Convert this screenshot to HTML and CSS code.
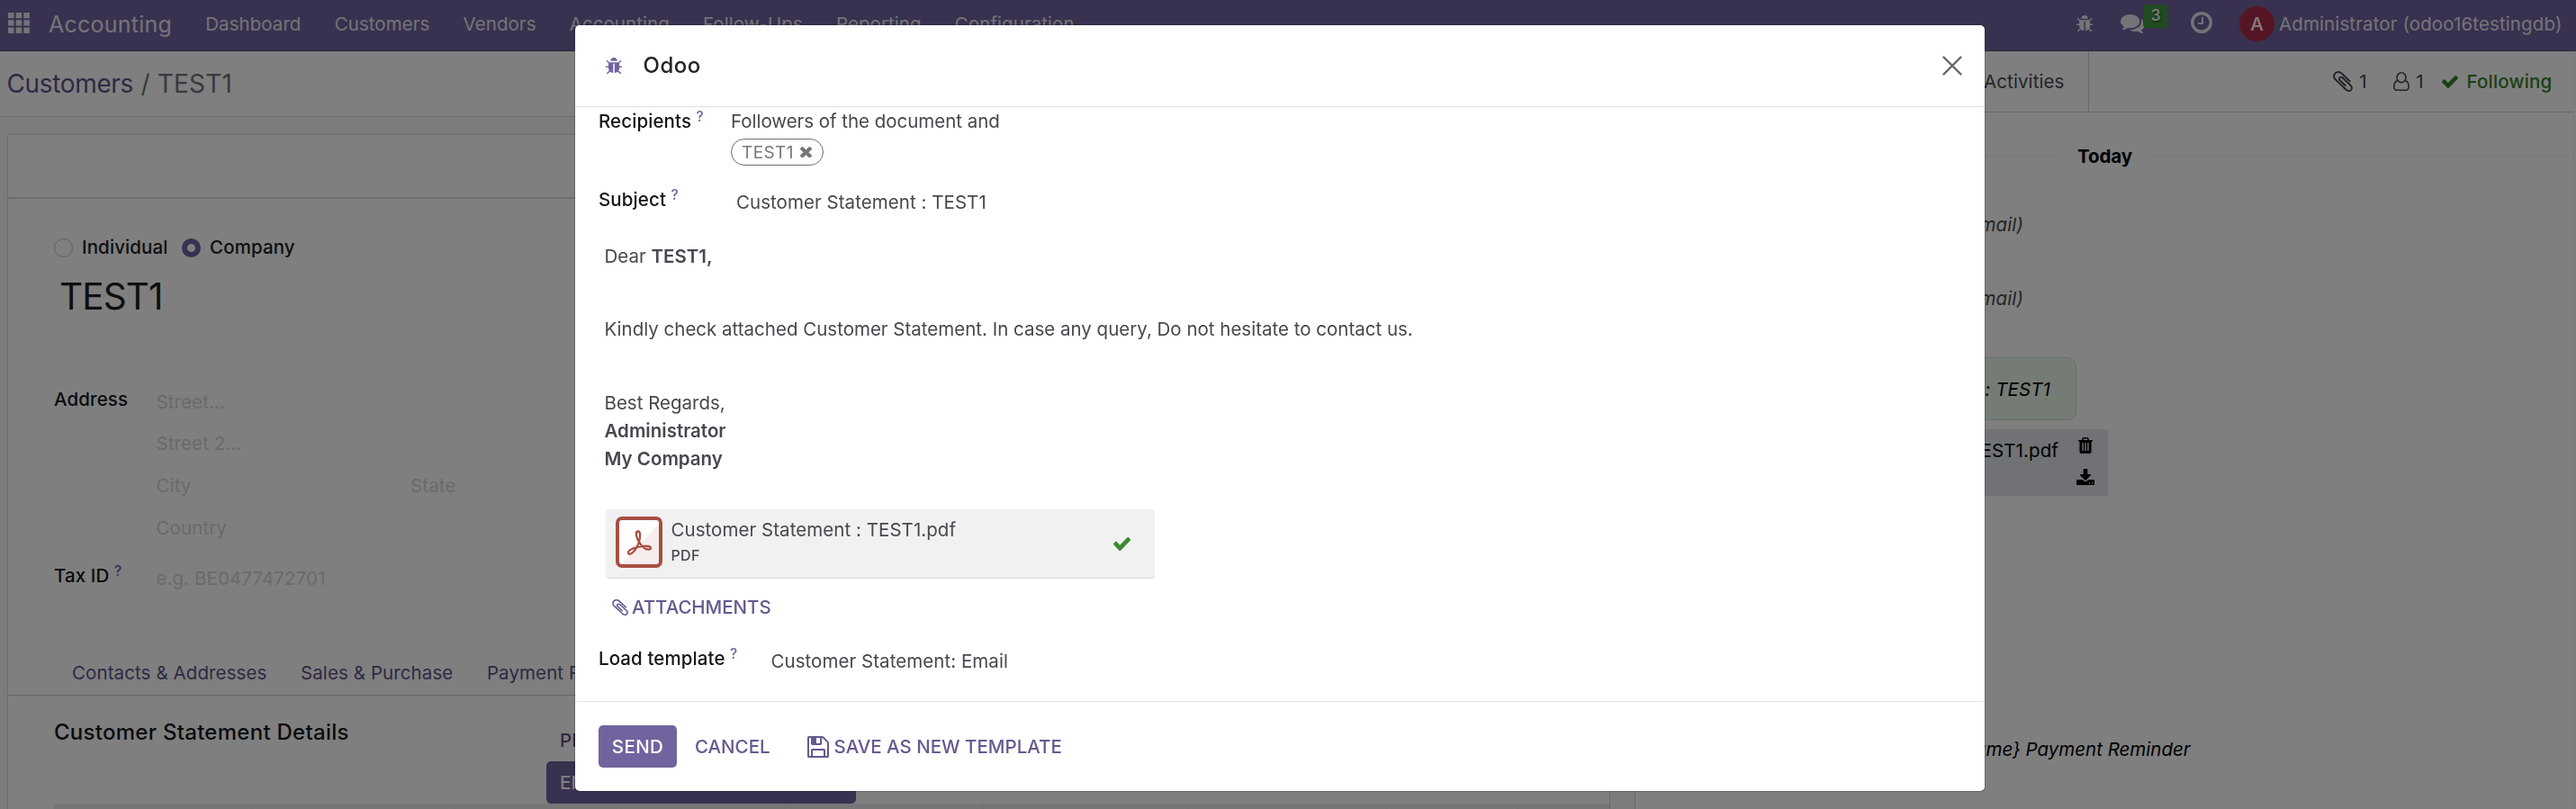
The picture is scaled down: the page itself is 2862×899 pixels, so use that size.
FILE: index.html
```
<!DOCTYPE html>
<html lang="en">
<head>
<meta charset="utf-8">
<title>Odoo</title>
<link rel="stylesheet" href="styles.css">
</head>
<body>
<svg class="defs" width="0" height="0">
  <symbol id="bug" viewBox="128 64 1568 1600" preserveAspectRatio="none"><path d="M1696 960q0 26-19 45t-45 19h-224q0 171-67 290l208 209q19 19 19 45t-19 45q-18 19-45 19t-45-19l-198-197q-5 5-15 13t-42 28.5-65 36.5-82 29-97 13v-896h-128v896q-51 0-101.500-13.500t-87-33-66-39-43.500-32.500l-15-14-183 207q-20 21-48 21-24 0-43-16-19-18-20.500-44.500t15.500-46.500l202-227q-58-114-58-274h-224q-26 0-45-19t-19-45 19-45 45-19h224v-294l-173-173q-19-19-19-45t19-45 45-19 45 19l173 173h844l173-173q19-19 45-19t45 19 19 45-19 45l-173 173v294h224q26 0 45 19t19 45zm-480-576h-640q0-133 93.500-226.500t226.500-93.500 226.500 93.500 93.500 226.500z"/></symbol>
  <symbol id="check" viewBox="121 334 1550 1188" preserveAspectRatio="none"><path d="M1671 566q0 40-28 68l-724 724-136 136q-28 28-68 28t-68-28l-136-136-362-362q-28-28-28-68t28-68l136-136q28-28 68-28t68 28l294 295 656-657q28-28 68-28t68 28l136 136q28 28 28 68z"/></symbol>
  <symbol id="times" viewBox="302 366 1188 1188" preserveAspectRatio="none"><path d="M1490 1322q0 40-28 68l-136 136q-28 28-68 28t-68-28l-294-294-294 294q-28 28-68 28t-68-28l-136-136q-28-28-28-68t28-68l294-294-294-294q-28-28-28-68t28-68l136-136q28-28 68-28t68 28l294 294 294-294q28-28 68-28t68 28l136 136q28 28 28 68t-28 68l-294 294 294 294q28 28 28 68z"/></symbol>
  <symbol id="comments" viewBox="0 256 1792 1408" preserveAspectRatio="none"><path d="M1408 768q0 139-94 257t-256.500 186.500-353.500 68.500q-86 0-176-16-124 88-278 128-36 9-86 16h-3q-11 0-20.500-8t-11.500-21q-1-3-1-6.500t.5-6.500 2-6l2.500-5 3.500-5.500 4-5 4.500-5 4-4.500q5-6 23-25t26-29.500 22.500-29 25-38.500 20.500-44q-124-72-195-177t-71-224q0-139 94-257t256.500-186.500 353.500-68.500 353.500 68.500 256.500 186.500 94 257zm384 256q0 120-71 224.500t-195 176.500q10 24 20.500 44t25 38.500 22.500 29 26 29.500 23 25q1 1 4 4.500t4.500 5 4 5 3.500 5.500l2.500 5 2 6 .5 6.500-1 6.500q-3 14-13 22t-22 7q-50-7-86-16-154-40-278-128-90 16-176 16-271 0-472-132 58 4 88 4 161 0 309-45t264-129q125-92 192-212t67-254q0-77-23-152 129 71 204 178t75 230z"/></symbol>
  <symbol id="clock" viewBox="128 128 1536 1536" preserveAspectRatio="none"><path d="M1024 544v448q0 14-9 23t-23 9h-320q-14 0-23-9t-9-23v-64q0-14 9-23t23-9h224v-352q0-14 9-23t23-9h64q14 0 23 9t9 23zm416 352q0-148-73-273t-198-198-273-73-273 73-198 198-73 273 73 273 198 198 273 73 273-73 198-198 73-273zm224 0q0 209-103 385.500t-279.500 279.500-385.500 103-385.500-103-279.500-279.500-103-385.500 103-385.500 279.500-279.500 385.500-103 385.500 103 279.500 279.500 103 385.500z"/></symbol>
  <symbol id="clip" viewBox="190 128 1412 1536" preserveAspectRatio="none"><path d="M1596 1385q0 117-79 196t-196 79q-135 0-235-100l-777-776q-113-115-113-271 0-159 110-270t269-111q158 0 273 113l605 606q10 10 10 22 0 16-30.500 46.500t-46.500 30.500q-13 0-23-10l-606-607q-79-77-181-77-106 0-179 75t-73 181q0 105 76 181l776 777q63 63 145 63 64 0 106-42t42-106q0-82-63-145l-581-581q-26-24-60-24-29 0-48 19t-19 48q0 32 25 59l410 410q10 10 10 22 0 16-31 47t-47 31q-12 0-22-10l-410-410q-63-61-63-149 0-82 57-139t139-57q88 0 149 63l581 581q100 98 100 235z"/></symbol>
  <symbol id="floppy" viewBox="128 128 1536 1536" preserveAspectRatio="none"><path d="M512 1536h768v-384h-768v384zm896 0h128v-896q0-14-10-38.500t-20-34.500l-281-281q-10-10-34-20t-39-10v416q0 40-28 68t-68 28h-576q-40 0-68-28t-28-68v-416h-128v1280h128v-416q0-40 28-68t68-28h832q40 0 68 28t28 68v416zm-384-928v-320q0-13-9.500-22.500t-22.500-9.500h-192q-13 0-22.500 9.500t-9.500 22.500v320q0 13 9.500 22.500t22.500 9.500h192q13 0 22.500-9.500t9.500-22.500zm640 32v928q0 40-28 68t-68 28h-1344q-40 0-68-28t-28-68v-1344q0-40 28-68t68-28h928q40 0 88 20t76 48l280 280q28 28 48 76t20 88z"/></symbol>
  <symbol id="trash" viewBox="192 128 1408 1536" preserveAspectRatio="none"><path d="M704 1376v-704q0-14-9-23t-23-9h-64q-14 0-23 9t-9 23v704q0 14 9 23t23 9h64q14 0 23-9t9-23zm256 0v-704q0-14-9-23t-23-9h-64q-14 0-23 9t-9 23v704q0 14 9 23t23 9h64q14 0 23-9t9-23zm256 0v-704q0-14-9-23t-23-9h-64q-14 0-23 9t-9 23v704q0 14 9 23t23 9h64q14 0 23-9t9-23zm-544-992h448l-48-117q-7-9-17-11h-317q-10 2-17 11zm928 32v64q0 14-9 23t-23 9h-96v948q0 83-47 143.500t-113 60.500h-832q-66 0-113-58.500t-47-141.500v-952h-96q-14 0-23-9t-9-23v-64q0-14 9-23t23-9h309l70-167q15-37 54-63t79-26h320q40 0 79 26t54 63l70 167h309q14 0 23 9t9 23z"/></symbol>
  <symbol id="download" viewBox="64 0 1664 1536" preserveAspectRatio="none"><path d="M1344 1344q0-26-19-45t-45-19-45 19-19 45 19 45 45 19 45-19 19-45zm256 0q0-26-19-45t-45-19-45 19-19 45 19 45 45 19 45-19 19-45zm128-224v320q0 40-28 68t-68 28h-1472q-40 0-68-28t-28-68v-320q0-40 28-68t68-28h465l135 136q58 56 136 56t136-56l136-136h464q40 0 68 28t28 68zm-325-569q17 41-14 70l-448 448q-18 19-45 19t-45-19l-448-448q-31-29-14-70 17-39 59-39h256v-448q0-26 19-45t45-19h256q26 0 45 19t19 45v448h256q42 0 59 39z"/></symbol>
</svg>

<header class="navbar">
  <svg class="apps" viewBox="0 0 24 23"><path d="M0 0h6.500v6.300H0zM8.700 0h6.500v6.300H8.700zM17.400 0h6.500v6.300h-6.500zM0 8.300h6.500v6.300H0zM8.700 8.300h6.500v6.300H8.700zM17.400 8.300h6.500v6.300h-6.500zM0 16.600h6.500v6.300H0zM8.700 16.600h6.500v6.300H8.700zM17.400 16.600h6.500v6.300h-6.500z"/></svg>
  <span class="brand">Accounting</span>
  <nav class="menu">
    <span>Dashboard</span><span>Customers</span><span>Vendors</span><span>Accounting</span><span>Follow-Ups</span><span>Reporting</span><span>Configuration</span>
  </nav>
  <div class="systray">
    <svg class="ic-bug"><use href="#bug"/></svg>
    <span class="messages"><svg class="ic-comments"><use href="#comments"/></svg><b class="badge">3</b></span>
    <svg class="ic-clock"><use href="#clock"/></svg>
    <span class="avatar">A</span>
    <span class="user">Administrator (odoo16testingdb)</span>
  </div>
</header>

<main class="main">
  <section class="form">
    <div class="breadcrumb"><span class="crumb-link">Customers</span><span class="slash">/</span><span class="crumb-current">TEST1</span></div>
    <div class="form-bg">
      <div class="sheet">
        <div class="statusbar"></div>
        <div class="sheet-body">
          <div class="radios">
            <i class="radio"></i><span class="radio-label">Individual</span>
            <i class="radio checked"></i><span class="radio-label">Company</span>
          </div>
          <h1 class="name">TEST1</h1>
          <div class="field-row address">
            <div class="label">Address</div>
            <div class="placeholder">
              <div class="line">Street...</div>
              <div class="line">Street 2...</div>
              <div class="line"><span class="city">City</span><span>State</span></div>
              <div class="line">Country</div>
            </div>
          </div>
          <div class="field-row tax">
            <div class="label">Tax ID<sup class="help">?</sup></div>
            <div class="placeholder">e.g. BE0477472701</div>
          </div>
        </div>
        <div class="tabs"><span>Contacts &amp; Addresses</span><span>Sales &amp; Purchase</span><span>Payment F</span></div>
        <div class="tab-page">
          <div class="statement">
            <h2 class="statement-title">Customer Statement Details</h2>
            <div class="statement-buttons">
              <span class="btn-print">PRINT</span>
              <span class="btn-email">EMAIL</span>
            </div>
          </div>
          <div class="table-head"><i></i><i></i><i></i><i></i><i></i><i></i><i></i><i></i><i></i></div>
        </div>
      </div>
    </div>
  </section>

  <aside class="chatter">
    <div class="chatter-top">
      <div class="chatter-tabs"><span>Activities</span></div>
      <div class="chatter-info">
        <svg class="ic-clip"><use href="#clip"/></svg><span class="count">1</span>
        <svg class="ic-user" viewBox="0 0 18 21"><ellipse cx="9" cy="6.200" rx="5" ry="5.400"/><path d="M4.800 9.600C2 10.300.8 12.800.8 16.300c0 2.400 1.400 3.900 3.400 3.900h9.600c2 0 3.400-1.500 3.400-3.900 0-3.500-1.200-6-4-6.700"/></svg><span class="count">1</span>
        <svg class="ic-follow"><use href="#check"/></svg><span class="following">Following</span>
      </div>
    </div>
    <div class="day"><i></i><b>Today</b><i></i></div>
    <div class="note first">(Email)</div>
    <div class="note second">(Email)</div>
    <div class="bubble">Customer Statement : TEST1</div>
    <div class="file">
      <span class="file-name">TEST1.pdf</span>
      <span class="file-actions"><svg class="ic-trash"><use href="#trash"/></svg><svg class="ic-download"><use href="#download"/></svg></span>
    </div>
    <div class="reminder">{name} Payment Reminder</div>
  </aside>
  <div class="scroll-edge"></div>
</main>

<div class="overlay">
  <div class="modal">
    <div class="modal-head">
      <svg class="ic-bug purple"><use href="#bug"/></svg>
      <span class="modal-title">Odoo</span>
      <svg class="close" viewBox="0 0 22 22"><path d="M1.500 1.500l19 19M20.500 1.500l-19 19"/></svg>
    </div>
    <div class="modal-body">
      <div class="m-row">
        <div class="label m-label">Recipients<sup class="help">?</sup></div>
        <div>
          <div class="followers">Followers of the document and</div>
          <div class="tag">TEST1<svg class="ic-times"><use href="#times"/></svg></div>
        </div>
      </div>
      <div class="m-row subject">
        <div class="label m-label">Subject<sup class="help">?</sup></div>
        <div class="value">Customer Statement : TEST1</div>
      </div>
      <div class="mail">
        <p>Dear <b>TEST1,</b></p>
        <p>Kindly check attached Customer Statement. In case any query, Do not hesitate to contact us.</p>
        <p>Best Regards,<br><b>Administrator</b><br><b>My Company</b></p>
      </div>
      <div class="attachment">
        <svg class="pdf" viewBox="0 0 52 57"><rect x="2" y="2" width="48" height="53" rx="5" fill="#fff"/><path d="M50 6v44q0 5-5 5H5z" fill="#f6edec"/><rect x="2" y="2" width="48" height="53" rx="5" fill="none" stroke="#a94f42" stroke-width="4"/><path class="pdf-mark" d="M26 28c-3-4-4.500-11-1.500-11.500 3.500-.5 3 6.500 1.500 11.500-2 6-6 12-9.500 13.500-2.500 1-3.500-1.500-1.500-3.500 4-3.500 14-5.500 20.500-5 4.500.4 4.500 3.700 1 3.700-4 0-8-4-10.500-8.700z"/></svg>
        <div class="attachment-text"><div class="attachment-name">Customer Statement : TEST1.pdf</div><div class="attachment-type">PDF</div></div>
        <svg class="ic-done"><use href="#check"/></svg>
      </div>
      <div class="attach-btn"><svg class="ic-clip small"><use href="#clip"/></svg>ATTACHMENTS</div>
      <div class="m-row template">
        <div class="label m-label wide">Load template<sup class="help">?</sup></div>
        <div class="value">Customer Statement: Email</div>
      </div>
    </div>
    <div class="modal-foot">
      <span class="send">SEND</span>
      <span class="cancel">CANCEL</span>
      <span class="save"><svg class="ic-floppy"><use href="#floppy"/></svg>SAVE AS NEW TEMPLATE</span>
    </div>
  </div>
</div>
</body>
</html>
```
FILE: styles.css
```
* { box-sizing: border-box; }
html, body { height: 100%; overflow: hidden; }
body {
  margin: 0;
  display: flex;
  flex-direction: column;
  font: 400 20.5px/30px Inter, "Liberation Sans", sans-serif;
  letter-spacing: .1px;
  color: #46494f;
  background: #fff;
}
svg { display: block; flex: none; fill: currentColor; }
.defs { position: absolute; }
span, b { white-space: nowrap; }
b { font-weight: 600; letter-spacing: 0; }
h1, h2, p { margin: 0; font-weight: inherit; }

/* Navbar */
.navbar {
  flex: none;
  height: 57px;
  padding: 0 0 3px 9px;
  display: flex;
  align-items: center;
  background: #71639e;
  border-bottom: 1px solid #5a4f7f;
  color: #e9e7f0;
}
.apps { width: 24px; height: 23px; margin-top: -3px; }
.brand { margin: 0 37px 0 21px; font-size: 25px; letter-spacing: .25px; }
.menu { display: flex; gap: 37.200px; letter-spacing: .06px; }
.systray { width: 555.500px; margin-left: auto; display: flex; align-items: center; }
.ic-bug { width: 18.5px; height: 18.5px; }
.messages { position: relative; margin-left: 31px; }
.ic-comments { width: 27px; height: 21px; }
.badge {
  position: absolute;
  left: 25px;
  top: -11px;
  width: 28px;
  height: 26px;
  border-radius: 4px;
  background: #429642;
  color: #fff;
  font-size: 17px;
  line-height: 24px;
  font-weight: 500;
  text-align: center;
  text-shadow: 1px 2px 2px rgba(0, 0, 0, .4);
}
.ic-clock { width: 24px; height: 24px; margin: -4px 0 0 51px; }
.avatar {
  width: 39px;
  height: 39px;
  margin: -1px 0 0 30px;
  border-radius: 50%;
  background: #ad2b48;
  color: #fff;
  font-weight: 500;
  line-height: 39px;
  text-align: center;
}
.user { margin-left: 5px; letter-spacing: .12px; }

/* Form */
.main { flex: 1; min-height: 0; display: flex; overflow: hidden; }
.form { width: 1816px; flex: none; display: flex; flex-direction: column; }
.breadcrumb {
  height: 73px;
  flex: none;
  display: flex;
  align-items: center;
  padding-left: 7.500px;
  border-bottom: 1px solid #d8dae6;
  font-size: 28px;
  letter-spacing: -.35px;
}
.crumb-link { color: #5f5389; }
.slash { margin: 0 8.500px; color: #6c757d; }
.crumb-current { color: #6c757d; letter-spacing: .2px; }
.form-bg { flex: 1; padding: 19px 27px 0 8px; background: #f8f8fb; }
.sheet { height: 100%; background: #fff; border: 1px solid #d9dae2; border-bottom: 0; }
.statusbar { height: 71px; border-bottom: 2px solid #dcdde3; }
.sheet-body { padding: 39px 0 0 51px; }
.radios { display: flex; align-items: center; height: 30px; color: #1c1e22; font-weight: 500; }
.radio { width: 21px; height: 21px; border-radius: 50%; border: 1.500px solid #b9babf; }
.radio.checked { border: 6px solid #71639e; }
.radio-label { margin: 0 15.500px 0 10px; }
.name { margin: 15px 0 0 6px; height: 50px; font-size: 40.500px; line-height: 50px; letter-spacing: -.9px; color: #1c1e22; }
.field-row { display: grid; grid-template-columns: 113.500px 1fr; }
.address { margin-top: 73.500px; }
.label { font-weight: 500; color: #15171a; white-space: nowrap; }
.placeholder { padding-top: 3px; color: #d3d4d8; }
.line { height: 46.700px; display: flex; }
.city { width: 282.500px; }
.tax { margin-top: 6.500px; }
.help { margin-left: 5.500px; font-size: 15.500px; line-height: 0; vertical-align: 7px; color: #71639e; }
.tabs {
  margin-top: 75px;
  height: 40px;
  padding-left: 71px;
  display: flex;
  gap: 37.500px;
  color: #5f5389;
  border-bottom: 1px solid #c9cad2;
}
.tab-page { padding: 26px 0 0 51px; }
.statement { display: flex; }
.statement-title { width: 547px; font-size: 24px; font-weight: 500; letter-spacing: .27px; color: #15171a; }
.statement-buttons { width: 344px; font-weight: 500; }
.btn-print, .btn-email { display: block; height: 47px; padding-left: 15px; line-height: 47px; color: #5f5389; }
.btn-email { border-radius: 5px; background: #71639e; color: #fff; }
.table-head {
  display: grid;
  grid-template-columns: 222px 223px 186px 188px 214px 226px 222px 146px 50px;
  height: 20px;
  background: #ecedf2;
}
.table-head i { border-right: 1px solid #dfe0e6; }
.table-head i:last-child { border: 0; }

/* Chatter */
.chatter { flex: 1; border-left: 1px solid #d8dae2; }
.chatter-top { display: flex; height: 68px; border-bottom: 1px solid #cfd1de; }
.chatter-tabs {
  width: 504px;
  padding-right: 26.500px;
  display: flex;
  align-items: center;
  justify-content: flex-end;
  border-right: 1px solid #cfd1de;
}
.chatter-info { flex: 1; display: flex; align-items: center; justify-content: flex-end; padding-right: 24.500px; }
.ic-clip { width: 22px; height: 23px; }
.count { width: 14px; margin-left: 4px; text-align: center; }
.ic-user { width: 18px; height: 21px; margin-left: 27px; fill: none; stroke: currentColor; stroke-width: 1.600; }
.ic-follow { width: 18px; height: 14px; margin: 0 9px 0 18px; color: #35802b; }
.following { color: #35802b; font-weight: 500; letter-spacing: .2px; }
.day { margin-top: 33.500px; display: flex; align-items: center; color: #000; }
.day i { flex: 1; height: 1px; background: #f3f3f5; }
.day b { margin: 0 21px; font-weight: 700; letter-spacing: -.1px; }
.note { width: 431px; text-align: right; font-style: italic; }
.first { margin-top: 46px; }
.second { margin-top: 52.500px; }
.bubble {
  width: 490px;
  height: 70px;
  margin-top: 50px;
  padding: 20px 28px 0 0;
  text-align: right;
  font-style: italic;
  color: #000;
  background: #ebf6eb;
  border: 1px solid #d2ded3;
  border-radius: 0 10px 10px 0;
}
.file {
  width: 525px;
  height: 74px;
  margin-top: 10px;
  padding: 9px 15px 0 0;
  display: flex;
  justify-content: flex-end;
  color: #000;
  background: #e2e4ea;
  border-radius: 4px;
}
.file-actions { width: 20px; margin-left: 20px; display: flex; flex-direction: column; align-items: center; gap: 17px; }
.ic-trash { width: 16px; height: 18px; }
.ic-download { width: 20px; height: 18px; }
.reminder { width: 616.500px; margin-top: 267px; text-align: right; font-style: italic; color: #000; letter-spacing: 0; }
.scroll-edge { width: 2px; background: #fff; box-shadow: -1px 0 #f1f1f4; }

/* Dialog */
.overlay {
  position: fixed;
  inset: 0;
  padding: 28px 18px 20px 0;
  display: flex;
  justify-content: center;
  background: rgba(0, 0, 0, .5);
}
.modal {
  width: 1566px;
  height: 851px;
  display: flex;
  flex-direction: column;
  background: #fff;
  border-radius: 5px;
  box-shadow: 0 0 0 1px rgba(0, 0, 0, .2);
}
.modal-head {
  flex: none;
  height: 91px;
  padding: 0 25.500px 0 33.500px;
  display: flex;
  align-items: center;
  border-bottom: 1px solid #dee2e6;
}
.purple { color: #71639e; }
.modal-title { margin-left: 23.500px; font-size: 24px; font-weight: 500; letter-spacing: .5px; color: #212529; }
.close { width: 22px; height: 22px; margin-left: auto; stroke: #666; stroke-width: 2.400; stroke-linecap: round; }
.modal-body { flex: 1; padding: .5px 25px 0 26px; }
.m-row { display: flex; }
.m-label { width: 147px; }
.wide { width: 186px; }
.followers { letter-spacing: -.03px; }
.tag {
  width: 103px;
  height: 30px;
  margin-top: 4.500px;
  padding: 1px 0 0 11px;
  display: flex;
  align-items: center;
  border: 1.500px solid #6f6f6f;
  border-radius: 15px;
  font-size: 19px;
  letter-spacing: .4px;
  color: #777;
}
.ic-times { width: 13px; height: 12.500px; margin: -1px 0 0 7px; }
.subject { margin-top: 22.500px; }
.subject .value { padding: 3px 0 0 6px; }
.value { letter-spacing: .05px; }
.mail { margin: 29.500px 0 0 6.500px; line-height: 31.300px; letter-spacing: 0; }
.mail p + p { margin-top: 50px; }
.attachment {
  width: 610px;
  height: 77px;
  margin: 40.500px 0 0 8px;
  padding-left: 11px;
  display: flex;
  background: #f1f1f1;
  border-bottom: 1px solid #d5d6d9;
  border-radius: 4px;
}
.pdf { width: 52px; height: 57px; margin-top: 8px; }
.pdf-mark { fill: none; stroke: #a94f42; stroke-width: 2.300; stroke-linejoin: round; }
.attachment-text { padding: 8px 0 0 9.500px; }
.attachment-name { letter-spacing: .05px; }
.attachment-type { font-size: 16px; line-height: 27px; font-weight: 500; letter-spacing: .3px; }
.ic-done { width: 19px; height: 15px; margin: 31px 27px 0 auto; color: #3a8a2c; }
.attach-btn {
  margin: 17px 0 0 14.500px;
  display: flex;
  align-items: center;
  font-weight: 500;
  letter-spacing: -.04px;
  color: #66598f;
}
.small { width: 18px; height: 18px; margin-right: 4.500px; }
.template { margin-top: 27px; }
.template .value { padding: 3px 0 0 5.500px; }
.modal-foot {
  flex: none;
  height: 100px;
  padding: 26px 0 0 26px;
  display: flex;
  border-top: 1px solid #dee2e6;
  line-height: 47px;
  font-weight: 500;
  letter-spacing: 0;
  color: #66598f;
}
.send {
  width: 87px;
  height: 47px;
  border-radius: 5px;
  background: #71639e;
  color: #fff;
  text-align: center;
  letter-spacing: .4px;
}
.cancel { width: 125px; margin-left: 20px; }
.save { display: flex; align-items: center; height: 47px; }
.ic-floppy { width: 24px; height: 24px; margin-right: 5.500px; }
```
